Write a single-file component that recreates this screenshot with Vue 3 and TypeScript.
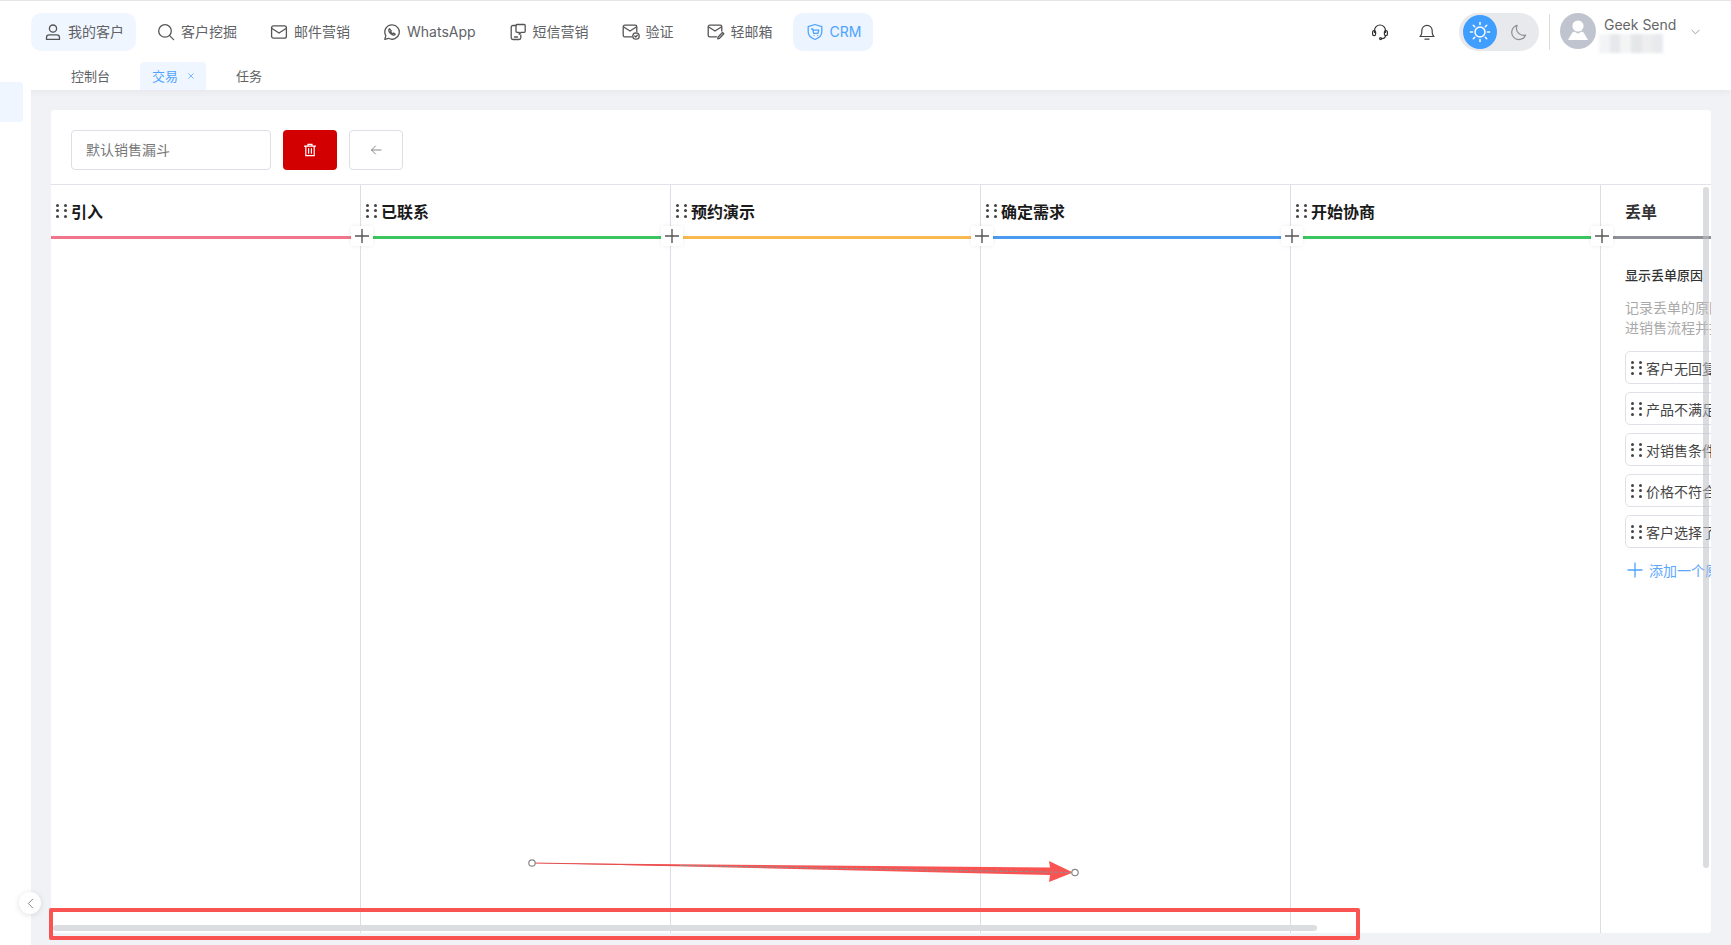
<template>
  <div class="page">
    <header class="topbar">
      <div class="nav-row">
        <nav class="nav">
          <a v-for="n in navItems" :key="n.label" class="nav-item" :class="{ active: n.active, crm: n.crm }">
            <svg class="nav-icon" viewBox="0 0 18 18" fill="none" stroke="currentColor" stroke-width="1.3" stroke-linecap="round" stroke-linejoin="round">
              <path v-for="(d, i) in n.paths" :key="i" :d="d" />
            </svg>
            <span class="nav-label">{{ n.label }}</span>
          </a>
        </nav>
        <div class="right-tools">
          <svg class="tool headset" viewBox="0 0 18 18" fill="none" stroke="#333" stroke-width="1.2" stroke-linecap="round">
            <path d="M3.5 9.5V7.5a5.5 5.5 0 0 1 11 0v2" />
            <rect x="1.6" y="7.6" width="3" height="5" rx="1.4" />
            <rect x="13.4" y="7.6" width="3" height="5" rx="1.4" />
            <path d="M14.5 12.6c0 2-1.4 3-3.5 3" />
            <circle cx="9.6" cy="15.6" r="1" />
          </svg>
          <svg class="tool bell" viewBox="0 0 18 18" fill="none" stroke="#444" stroke-width="1.2" stroke-linecap="round" stroke-linejoin="round">
            <path d="M2 13.5c1.2-1 1.8-2 1.8-4V7.6a5.2 5.2 0 0 1 10.4 0v1.9c0 2 .6 3 1.8 4z" />
            <path d="M7 16.2h4" />
          </svg>
          <div class="theme-toggle">
            <span class="sun">
              <svg viewBox="0 0 24 24" width="24" height="24" fill="none" stroke="#fff" stroke-width="1.5" stroke-linecap="round">
                <circle cx="12" cy="12" r="5" />
                <path d="M12 2.5v2M12 19.5v2M2.5 12h2M19.5 12h2M5.3 5.3l1.4 1.4M17.3 17.3l1.4 1.4M5.3 18.7l1.4-1.4M17.3 6.7l1.4-1.4" />
              </svg>
            </span>
            <svg class="moon" viewBox="0 0 18 18" fill="none" stroke="#8f9197" stroke-width="1.3" stroke-linejoin="round">
              <path d="M7.5 1.5a7.6 7.6 0 1 0 9 10.2A7.5 7.5 0 0 1 7.5 1.5z" />
            </svg>
          </div>
          <i class="sep"></i>
          <div class="avatar">
            <svg viewBox="0 0 36 36" width="36" height="36" fill="#fff">
              <circle cx="18" cy="13" r="5.6" />
              <path d="M8 27l4.2-7.2c1-1.3 2.3-1.3 3.3-.6l2.5 1.5 2.5-1.5c1-.7 2.3-.7 3.3.6L28 27z" />
            </svg>
          </div>
          <div class="user">
            <span class="user-name">Geek Send</span>
            <div class="user-blur">
              <i v-for="(c, i) in blurTiles" :key="i" :style="{ background: c }"></i>
            </div>
          </div>
          <svg class="chevron" viewBox="0 0 10 6" fill="none" stroke="#888" stroke-width="0.9" stroke-linecap="round">
            <path d="M1 1l4 4 4-4" />
          </svg>
        </div>
      </div>
      <div class="tabs">
        <span class="tab">控制台</span>
        <span class="tab current">交易
          <svg class="tab-close" viewBox="0 0 8 8" width="8" height="8" stroke="#4ea3ff" stroke-width="1"><path d="M.5.5l7 7M7.500.5l-7 7" /></svg>
        </span>
        <span class="tab">任务</span>
      </div>
    </header>

    <div class="body">
      <aside class="side"><div class="side-active"></div></aside>
      <main class="content">
        <section class="card">
          <div class="toolbar">
            <div class="name-input">默认销售漏斗</div>
            <button class="btn-del">
              <svg viewBox="0 0 14 14" width="14" height="14" fill="none" stroke="#fff" stroke-width="1.2" stroke-linecap="round">
                <path d="M1.5 3.2h11M5 3V1.4h4V3M2.8 3.2v9.4h8.4V3.2M5.6 5.6v4.6M8.4 5.6v4.6" />
              </svg>
            </button>
            <button class="btn-back">
              <svg viewBox="0 0 12 12" width="12" height="12" fill="none" stroke="#888" stroke-width="1" stroke-linecap="round" stroke-linejoin="round">
                <path d="M11 6H1.5M5.5 2L1.5 6l4 4" />
              </svg>
            </button>
          </div>

          <div class="board">
            <div v-for="s in stages" :key="s.name" class="stage" :class="{ lost: s.lost }">
              <div class="stage-head">
                <span v-if="!s.lost" class="dots"><i v-for="d in 6" :key="d"></i></span>
                <span class="stage-name">{{ s.name }}</span>
              </div>
              <div class="stage-bar" :style="{ background: s.color }"></div>
              <span class="plus">
                <svg viewBox="0 0 16 16" width="16" height="16" stroke="#555" stroke-width="1.4"><path d="M8 1v14M1 8h14" /></svg>
              </span>
              <div v-if="s.lost" class="lost-body">
                <div class="lost-title">显示丢单原因</div>
                <p class="lost-desc">记录丢单的原因，帮助你改进销售流程并提高成交率</p>
                <div v-for="r in reasons" :key="r" class="reason">
                  <span class="dots"><i v-for="d in 6" :key="d"></i></span>
                  <span class="reason-text">{{ r }}</span>
                </div>
                <div class="add-reason">
                  <svg viewBox="0 0 16 16" width="16" height="16" stroke="#4ea3ff" stroke-width="1.3"><path d="M8 0.5v15M0.5 8h15" /></svg>
                  <span>添加一个原因</span>
                </div>
              </div>
            </div>
          </div>

          <div class="scroll-v"></div>
          <div class="scroll-h"></div>
        </section>
      </main>
    </div>

    <button class="collapse">
      <svg viewBox="0 0 8 12" width="7" height="11" fill="none" stroke="#777" stroke-width="1" stroke-linecap="round" stroke-linejoin="round"><path d="M6.5 1L1.5 6l5 5" /></svg>
    </button>

    <!-- 标注 -->
    <svg class="annot-arrow" viewBox="0 0 1731 945" width="1731" height="945">
      <polygon points="532,863 1050,867.500 1049,861 1073,872.500 1049,882 1050,875" fill="#f95352" />
      <line x1="532" y1="863" x2="680" y2="865.500" stroke="#e25050" stroke-width="1" />
      <line x1="680" y1="865.500" x2="1072" y2="872.500" stroke="#7d9a9c" stroke-width="1" stroke-dasharray="3 2" />
      <circle cx="532" cy="863" r="3.2" fill="#fff" stroke="#888" stroke-width="1.2" />
      <circle cx="1075" cy="872.500" r="3.2" fill="#fff" stroke="#888" stroke-width="1.2" />
    </svg>
    <div class="annot-box"></div>
  </div>
</template>

<script setup lang="ts">
interface NavItem {
  label: string;
  paths: string[];
  active?: boolean;
  crm?: boolean;
}

interface Stage {
  name: string;
  color: string;
  lost?: boolean;
}

const navItems: NavItem[] = [
  {
    label: '我的客户',
    active: true,
    paths: ['M9 2a3.6 3.6 0 1 0 0 7.2A3.6 3.6 0 0 0 9 2z', 'M2.5 16.4v-2c0-1.6 1.2-2.6 2.8-2.6h7.4c1.6 0 2.8 1 2.8 2.6v2z'],
  },
  {
    label: '客户挖掘',
    paths: ['M8 1.6a6.3 6.3 0 1 0 0 12.6A6.3 6.3 0 0 0 8 1.6z', 'M12.6 12.6l4 4'],
  },
  {
    label: '邮件营销',
    paths: ['M3.6 2.8h10.8c1.2 0 2 .8 2 2v8.4c0 1.2-.8 2-2 2H3.6c-1.2 0-2-.8-2-2V4.800c0-1.200.8-2 2-2z', 'M2 5.500l7 4.500 7-4.500'],
  },
  {
    label: 'WhatsApp',
    paths: ['M9 1.800a7.200 7.200 0 0 0-6.200 10.800L1.800 16.300l3.800-1A7.200 7.200 0 1 0 9 1.800z', 'M6.400 5.800c-.8.600-.9 1.600-.3 2.800.8 1.600 2.100 2.800 3.700 3.400 1.100.4 2 .1 2.500-.8l-1.700-1.100-.8.700c-1-.4-1.700-1.100-2.200-2.100l.7-.8z'],
  },
  {
    label: '短信营销',
    paths: ['M7 2.500H4c-1 0-1.800.8-1.800 1.800v10.400c0 1 .8 1.800 1.800 1.800h6c1 0 1.800-.8 1.800-1.800V12', 'M8 1.500h7.200c.6 0 1 .4 1 1v5.800c0 .6-.4 1-1 1h-3l-2 2v-2H8c-.6 0-1-.4-1-1V2.500c0-.6.400-1 1-1z', 'M5.500 14h3'],
  },
  {
    label: '验证',
    paths: ['M10 13.800H2.800c-.9 0-1.600-.7-1.600-1.600V3.800c0-.9.7-1.600 1.600-1.600h10.400c.9 0 1.600.7 1.600 1.600v4.700', 'M1.700 4l6.300 4 6.300-4', 'M14 9.800a3.200 3.200 0 1 0 0 6.400 3.200 3.200 0 0 0 0-6.400z', 'M12.700 13l1 1 1.600-1.700'],
  },
  {
    label: '轻邮箱',
    paths: ['M9.500 13.800H2.800c-.9 0-1.600-.7-1.600-1.600V3.800c0-.9.7-1.600 1.600-1.600h10.400c.9 0 1.600.7 1.600 1.600v4.200', 'M1.700 4l6.300 4 6.300-4', 'M15.500 9.500l1.300 1.300-4.300 4.500-1.800.5.400-1.800z'],
  },
  {
    label: 'CRM',
    crm: true,
    paths: ['M9 1.500l6.800 2.200v5.100c0 3.500-2.700 6.200-6.800 7.700-4.100-1.500-6.800-4.200-6.800-7.700V3.700z', 'M5.500 6h1.200l1 4.400h4.300l.8-3.200H7', 'M8 12.300h.01M11.600 12.300h.01'],
  },
];

const stages: Stage[] = [
  { name: '引入', color: '#f0758a' },
  { name: '已联系', color: '#3cc45f' },
  { name: '预约演示', color: '#f8b94e' },
  { name: '确定需求', color: '#4b9bf0' },
  { name: '开始协商', color: '#3cc45f' },
  { name: '丢单', color: '#8f9097', lost: true },
];

const reasons = ['客户无回复', '产品不满足需求', '对销售条件不满意', '价格不符合预算', '客户选择了竞品'];

const blurTiles = ['#f3f4f6', '#e6e8ec', '#f4f4f4', '#e4e6e8', '#eeeeee', '#e8eaee'];
</script>

<style>
html, body { margin: 0; background: #fff; }
</style>

<style scoped>
.page {
  position: relative; width: 1731px; height: 945px; overflow: hidden; background: #fff;
  font-family: Inter, "Noto Sans CJK SC", sans-serif; color: #555;
  display: flex; flex-direction: column; border-top: 1px solid #e4e4e4; box-sizing: border-box;
}
.topbar { height: 89px; flex-shrink: 0; position: relative; z-index: 2; box-shadow: 0 1px 8px rgba(0, 0, 0, .06); background: #fff; }
.nav-row { display: flex; align-items: center; height: 38px; padding: 12px 0 0 31px; }
.nav { display: flex; gap: 8px; }
.nav-item {
  display: flex; align-items: center; gap: 6px; height: 38px; padding: 0 12px 0 13px;
  border-radius: 10px; font-size: 14px; color: #606266; box-sizing: border-box;
}
.nav-label { margin-top: -2px; }
.nav-icon { width: 18px; height: 18px; flex-shrink: 0; color: #555; }
.nav-item.active { background: #f0f6ff; }
.nav-item.crm { background: #ebf4ff; color: #4ea3ff; }
.nav-item.crm .nav-icon { color: #4ea3ff; }

.right-tools { margin-left: auto; display: flex; align-items: center; height: 38px; }
.tool { width: 18px; height: 18px; }
.headset { margin-right: 29px; }
.bell { margin-right: 23px; }
.theme-toggle { width: 80px; height: 38px; border-radius: 19px; background: #e8e9ec; display: flex; align-items: center; padding-left: 4px; box-sizing: border-box; }
.sun { width: 34px; height: 34px; border-radius: 50%; background: #409eff; display: flex; align-items: center; justify-content: center; }
.moon { width: 17px; height: 17px; margin-left: 13px; }
.sep { width: 1px; height: 36px; background: #dcdcdc; margin: 0 10px; }
.avatar { width: 36px; height: 36px; border-radius: 50%; background: #c0c4ce; margin-top: -2px; }
.user { width: 96px; height: 38px; position: relative; }
.user-name { position: absolute; left: 8px; top: 2px; font-size: 14px; line-height: 20px; color: #666; white-space: nowrap; }
.user-blur { position: absolute; left: 3px; top: 21px; width: 64px; height: 19px; display: flex; filter: blur(1.5px); }
.user-blur i { flex: 1; }
.chevron { width: 9px; height: 6px; margin-right: 31px; margin-left: -1px; }

.tabs { display: flex; height: 28px; margin-top: 11px; padding-left: 59px; font-size: 13px; }
.tab { display: flex; align-items: center; padding: 0 12px 2px; color: #606266; margin-right: 18px; white-space: nowrap; }
.tab.current { background: #f0f6ff; color: #4ea3ff; border-radius: 4px 4px 0 0; width: 66px; box-sizing: border-box; }
.tab-close { margin-left: 10px; margin-top: 2px; }

.body { flex: 1; display: flex; min-height: 0; }
.side { width: 31px; flex-shrink: 0; background: #fff; position: relative; z-index: 3; }
.side-active { width: 23px; height: 40px; margin-top: -8px; background: #f0f6ff; border-radius: 0 3px 3px 0; }
.content { flex: 1; background: #f1f2f5; padding: 20px 20px 12px; min-width: 0; display: flex; }

.card { flex: 1; position: relative; background: #fff; border-radius: 3px; min-width: 0; display: flex; flex-direction: column; overflow: hidden; }
.toolbar { height: 75px; padding: 20px 20px 0; box-sizing: border-box; display: flex; gap: 12px; border-bottom: 1px solid #e2e3ea; flex-shrink: 0; }
.name-input {
  width: 200px; height: 40px; box-sizing: border-box; border: 1px solid #dcdfe6; border-radius: 4px;
  font-size: 14px; line-height: 38px; padding-left: 14px; color: #777;
}
.btn-del { width: 54px; height: 40px; border: 0; border-radius: 4px; background: #d20000; display: flex; align-items: center; justify-content: center; padding: 0; }
.btn-back { width: 54px; height: 40px; border: 1px solid #dcdfe6; border-radius: 4px; background: #fff; display: flex; align-items: center; justify-content: center; padding: 0; }

.board { flex: 1; display: flex; min-height: 0; overflow: hidden; }
.stage { width: 310px; flex-shrink: 0; position: relative; border-right: 1px solid #dcdde6; box-sizing: border-box; }
.stage.lost { border-right: 0; }
.stage-head { display: flex; align-items: center; height: 51px; padding-left: 5px; }
.stage.lost .stage-head { padding-left: 24px; }
.stage-name { font-size: 16px; font-weight: 700; color: #1a1a1a; margin-left: 4px; }
.stage.lost .stage-name { margin-left: 0; color: #333; }
.stage-bar { height: 3px; }
.plus {
  position: absolute; right: -13px; top: 41px; width: 22px; height: 20px; background: #fff; border-radius: 3px;
  box-shadow: 0 0 4px rgba(0, 0, 0, .08); display: flex; align-items: center; justify-content: center; z-index: 1;
}

.dots { display: grid; grid-template-columns: 3px 3px; gap: 2.500px 5px; width: 11px; flex-shrink: 0; }
.dots i { width: 3px; height: 3px; border-radius: 50%; background: #444; }

.lost-body { padding: 26px 0 0 24px; }
.lost-title { font-size: 13px; line-height: 20px; font-weight: 500; color: #333; white-space: nowrap; }
.lost-desc { margin: 13px 0 13px; width: 175px; font-size: 14px; line-height: 20px; color: #aaa; }
.reason {
  display: flex; align-items: center; gap: 4px; width: 200px; height: 33px; margin-bottom: 8px; box-sizing: border-box;
  border: 1px solid #e0e1e8; border-radius: 5px; padding-left: 5px; font-size: 14px; color: #444; white-space: nowrap;
}
.add-reason { display: flex; align-items: center; gap: 6px; padding-left: 2px; margin-top: 12px; font-size: 14px; color: #5ba7ff; white-space: nowrap; }

.scroll-v { position: absolute; right: 2px; top: 77px; width: 6px; height: 681px; border-radius: 3px; background: rgba(190, 192, 198, .55); z-index: 2; }
.scroll-h { position: absolute; left: 2px; bottom: 2px; width: 1264px; height: 6px; border-radius: 3px; background: #dcdde0; z-index: 2; }

.collapse {
  position: absolute; left: 19px; top: 891px; width: 22px; height: 22px; padding: 0; border: 0; border-radius: 50%; background: #fff;
  box-shadow: 0 1px 6px rgba(0, 0, 0, .12); display: flex; align-items: center; justify-content: center; z-index: 4;
}
.annot-arrow { position: absolute; left: 0; top: -1px; z-index: 5; pointer-events: none; }
.annot-box { position: absolute; left: 49px; top: 907px; width: 1311px; height: 32px; box-sizing: border-box; border: 4px solid #f95352; border-radius: 2px; z-index: 5; }
</style>
